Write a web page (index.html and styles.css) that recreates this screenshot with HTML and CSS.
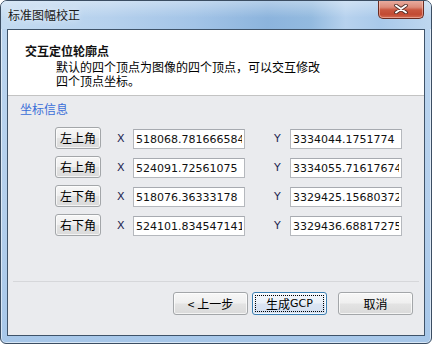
FILE: index.html
```html
<!DOCTYPE html>
<html lang="zh-CN">
<head>
    <meta charset="UTF-8">
    <title>标准图幅校正</title>
    <link rel="stylesheet" href="styles.css">
</head>
<body>
    <div class="window">
        <div class="titlebar">
            <span class="title">标准图幅校正</span>
            <div class="close">
                <svg width="14" height="10" viewBox="0 0 14 10">
                    <path d="M2 1.5 L12 8.5 M12 1.5 L2 8.5" stroke="#4a2a24" stroke-width="3.6" stroke-linecap="round"/>
                    <path d="M2 1.5 L12 8.5 M12 1.5 L2 8.5" stroke="#ffffff" stroke-width="2" stroke-linecap="round"/>
                </svg>
            </div>
        </div>
        <div class="client">
            <div class="header">
                <div class="header-title">交互定位轮廓点</div>
                <div class="header-desc">默认的四个顶点为图像的四个顶点，可以交互修改<br>四个顶点坐标。</div>
            </div>
            <div class="content">
                <div class="legend">坐标信息</div>
                <div class="rows">
                    <div class="row">
                        <button class="btn corner">左上角</button>
                        <span class="axis">X</span>
                        <input class="coord" type="text" value="518068.7816665842" readonly>
                        <span class="axis axis-y">Y</span>
                        <input class="coord" type="text" value="3334044.1751774" readonly>
                    </div>
                    <div class="row">
                        <button class="btn corner">右上角</button>
                        <span class="axis">X</span>
                        <input class="coord" type="text" value="524091.72561075" readonly>
                        <span class="axis axis-y">Y</span>
                        <input class="coord" type="text" value="3334055.716176745" readonly>
                    </div>
                    <div class="row">
                        <button class="btn corner">左下角</button>
                        <span class="axis">X</span>
                        <input class="coord" type="text" value="518076.36333178" readonly>
                        <span class="axis axis-y">Y</span>
                        <input class="coord" type="text" value="3329425.156803721" readonly>
                    </div>
                    <div class="row">
                        <button class="btn corner">右下角</button>
                        <span class="axis">X</span>
                        <input class="coord" type="text" value="524101.8345471415" readonly>
                        <span class="axis axis-y">Y</span>
                        <input class="coord" type="text" value="3329436.688172755" readonly>
                    </div>
                </div>
            </div>
            <div class="footer">
                <button class="btn wide">&lt; 上一步</button>
                <button class="btn wide default"><span class="focus">生成<span class="latin">GCP</span></span></button>
                <button class="btn wide cancel">取消</button>
            </div>
        </div>
    </div>
</body>
</html>
```
FILE: styles.css
```css
body {
    margin: 0;
    padding: 0;
    font-family: "Noto Sans CJK SC", "DejaVu Sans", sans-serif;
    font-size: 12px;
    color: #000;
}
.window {
    width: 432px;
    height: 344px;
    box-sizing: border-box;
    border: 1px solid #3b4d62;
    border-radius: 7px 7px 6px 6px;
    background: linear-gradient(180deg, #bcd6f0 0%, #b4cfec 60%, #a7c7e9 100%);
    box-shadow: inset 0 0 0 1px rgba(255, 255, 255, 0.55);
    display: flex;
    flex-direction: column;
    overflow: hidden;
}
.titlebar {
    height: 28px;
    flex-shrink: 0;
    display: flex;
    justify-content: space-between;
    align-items: flex-start;
    padding: 0 7px 0 7px;
    margin: 0 -1px;
    background:
        linear-gradient(180deg, rgba(255, 255, 255, 0.35) 0%, rgba(255, 255, 255, 0) 60%),
        linear-gradient(90deg, #c4dbf1 0%, #b6d1ed 25%, #a3c4e7 45%, #8cb4dd 62%, #93badf 72%, #b7d2ee 80%, #a9c9ea 88%, #bfd7ef 100%);
}
.title {
    line-height: 28px;
    margin-left: 1px;
    color: #1a1a1a;
    text-shadow: 0 0 6px rgba(255, 255, 255, 0.9);
}
.close {
    width: 46px;
    height: 19px;
    margin-top: -1px;
    margin-right: 1px;
    box-sizing: border-box;
    border: 1px solid #6a2b21;
    border-top: none;
    border-radius: 0 0 5px 5px;
    background: linear-gradient(180deg, #eab0a4 0%, #dc8b79 40%, #c9563f 55%, #c24a33 80%, #d36b52 100%);
    box-shadow: inset 0 0 0 1px rgba(255, 210, 200, 0.5);
    display: flex;
    justify-content: center;
    align-items: center;
}
.client {
    flex: 1;
    margin: 0 6px 7px;
    border: 1px solid #3f5369;
    background: #eaebee;
    display: flex;
    flex-direction: column;
}
/* primary font with small metrics so the 14px lines don't collide; CJK falls back */
.header {
    background: #fff;
    padding: 15px 0 6px 17px;
    border-bottom: 1px solid #c3c3c3;
    font-family: "Liberation Sans", "Noto Sans CJK SC", sans-serif;
    line-height: 14px;
}
.header-title {
    font-weight: bold;
    color: #111;
}
.header-desc {
    margin-top: 2px;
    padding-left: 31px;
}
.content {
    flex: 1;
    padding: 5px 0 0 12px;
}
.legend {
    line-height: 16px;
    color: #3a6ed8;
}
.rows {
    margin-top: 10px;
    padding-left: 35px;
    display: flex;
    flex-direction: column;
    gap: 7px;
}
.row {
    display: flex;
    align-items: flex-start;
    height: 22px;
}
.btn {
    font-family: "Noto Sans CJK SC", sans-serif;
    font-size: 12px;
    color: #000;
    padding: 0;
    box-sizing: border-box;
    border: 1px solid #a3a6a9;
    border-radius: 3px;
    background: linear-gradient(180deg, #f7f7f7 0%, #efefef 48%, #e3e3e3 52%, #dadada 100%);
    box-shadow: inset 0 0 0 1px rgba(255, 255, 255, 0.7);
}
.corner {
    width: 46px;
    height: 22px;
    line-height: 18px;
}
.axis {
    width: 16px;
    margin-left: 16px;
    margin-top: 2px;
    line-height: 19px;
    font-family: "DejaVu Sans", sans-serif;
    font-size: 11px;
    color: #1c2450;
}
.axis-y {
    margin-left: 29px;
}
.coord {
    width: 112px;
    height: 20px;
    margin: 2px 0 0;
    padding: 0 2px;
    box-sizing: border-box;
    border: 1px solid #b5b8bd;
    border-top-color: #a7aab0;
    background: #fff;
    font-family: "DejaVu Sans", sans-serif;
    font-size: 11px;
    color: #111;
    outline: none;
}
.footer {
    height: 43px;
    margin: 0 5px;
    padding: 10px 6px 0 0;
    box-sizing: content-box;
    border-top: 1px solid #d6d7da;
    display: flex;
    justify-content: flex-end;
    align-items: flex-start;
}
.footer .btn {
    height: 23px;
    width: 75px;
}
.footer .default {
    margin-left: 4px;
    border-color: #3c7fb1;
    background: linear-gradient(180deg, #f3f7fc 0%, #e9f0f8 48%, #dbe5f3 52%, #d3dff0 100%);
    padding: 2px;
}
.footer .cancel {
    margin-left: 11px;
}
.focus {
    display: flex;
    justify-content: center;
    align-items: center;
    height: 100%;
    box-sizing: border-box;
    border: 1px dotted #000;
}
.latin {
    font-family: "DejaVu Sans", sans-serif;
    font-size: 11px;
}
```
